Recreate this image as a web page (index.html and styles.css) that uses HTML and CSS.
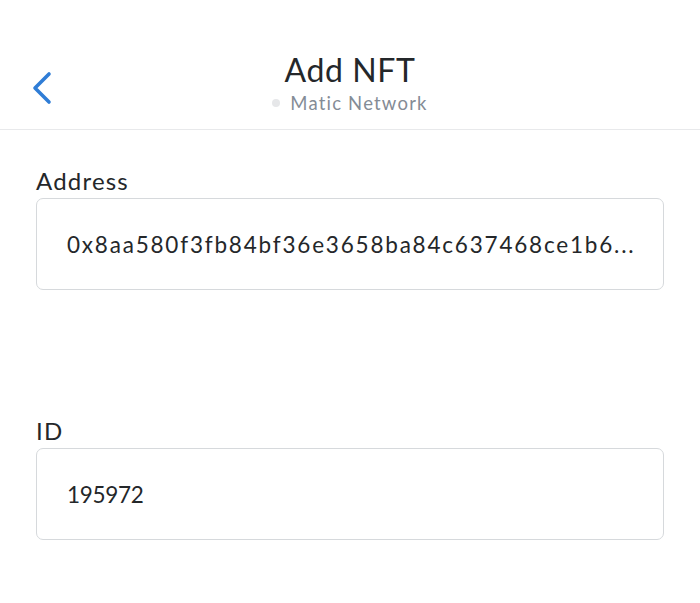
FILE: index.html
```html
<!DOCTYPE html>
<html>
<head>
<meta charset="utf-8">
<link rel="stylesheet" href="styles.css">
</head>
<body>
<header class="header">
  <div class="header-left">
    <svg class="back" width="24" height="36" viewBox="0 0 24 36">
      <path d="M17 3 L3 17 L17 31" fill="none" stroke="#2f7dd6" stroke-width="3.6" stroke-linecap="round" stroke-linejoin="round"/>
    </svg>
  </div>
  <div class="header-center">
    <div class="title">Add NFT</div>
    <div class="subtitle"><span class="dot"></span>Matic Network</div>
  </div>
  <div class="header-right"></div>
</header>
<main class="form">
  <div class="field">
    <div class="label">Address</div>
    <div class="input">0x8aa580f3fb84bf36e3658ba84c637468ce1b6...</div>
  </div>
  <div class="field field-id">
    <div class="label">ID</div>
    <div class="input input-id">195972</div>
  </div>
</main>
</body>
</html>
```
FILE: styles.css
```css
html, body {
  margin: 0;
  padding: 0;
  background: #ffffff;
}
body {
  font-family: Lato, "Noto Sans", sans-serif;
  color: #24272a;
  width: 700px;
}
.header {
  display: grid;
  grid-template-columns: 1fr auto 1fr;
  padding: 50px 0 14px;
  border-bottom: 1px solid #e8e9eb;
}
.header-left {
  display: flex;
  align-items: center;
  padding-left: 32px;
  padding-top: 12px;
}
.back {
  display: block;
}
.header-center {
  display: flex;
  flex-direction: column;
  align-items: center;
}
.title {
  font-size: 32px;
  line-height: 40px;
  letter-spacing: 0.6px;
}
.subtitle {
  margin-top: 1px;
  font-size: 18.5px;
  line-height: 24px;
  letter-spacing: 1.2px;
  color: #848c96;
  display: flex;
  align-items: center;
}
.dot {
  width: 8px;
  height: 8px;
  border-radius: 50%;
  background: #e6e7e9;
  margin-right: 10px;
}
.form {
  padding: 0 36px;
}
.field {
  margin-top: 36px;
}
.field-id {
  margin-top: 126px;
}
.label {
  font-size: 24px;
  line-height: 30px;
  letter-spacing: 1.2px;
  margin-bottom: 2px;
}
.input {
  box-sizing: border-box;
  height: 92px;
  border: 1px solid #d6d9dc;
  border-radius: 7px;
  padding: 0 30px;
  display: flex;
  align-items: center;
  font-size: 22.5px;
  letter-spacing: 1.8px;
  white-space: nowrap;
  overflow: hidden;
}
.input-id {
  letter-spacing: -0.3px;
}
```
